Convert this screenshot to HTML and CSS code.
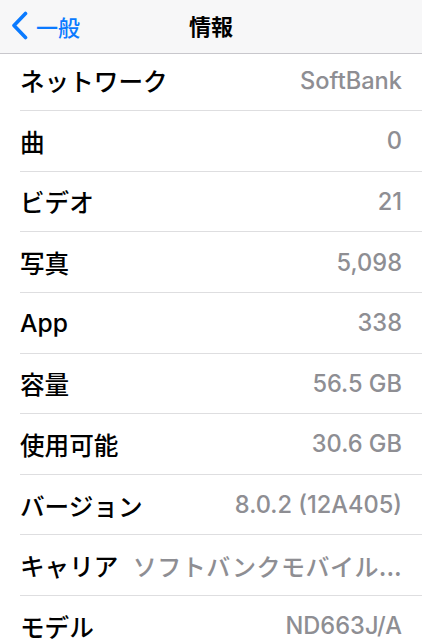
FILE: index.html
```html
<!DOCTYPE html>
<html lang="ja">
<head>
<meta charset="utf-8">
<link rel="stylesheet" href="styles.css">
</head>
<body>
<div class="screen">
  <header class="navbar">
    <div class="back">
      <svg class="chevron" width="18" height="30" viewBox="0 0 18 30">
        <polyline points="14.5,2.5 3,14.5 14.5,26.5" fill="none" stroke="#0a7aff" stroke-width="3.6" stroke-linecap="round" stroke-linejoin="round"/>
      </svg>
      <span class="back-label">一般</span>
    </div>
    <div class="title">情報</div>
  </header>
  <ul class="list">
    <li class="row first"><span class="label">ネットワーク</span><span class="value">SoftBank</span></li>
    <li class="row"><span class="label">曲</span><span class="value">0</span></li>
    <li class="row"><span class="label">ビデオ</span><span class="value">21</span></li>
    <li class="row"><span class="label">写真</span><span class="value">5,098</span></li>
    <li class="row"><span class="label">App</span><span class="value">338</span></li>
    <li class="row"><span class="label">容量</span><span class="value">56.5 GB</span></li>
    <li class="row"><span class="label">使用可能</span><span class="value">30.6 GB</span></li>
    <li class="row"><span class="label">バージョン</span><span class="value">8.0.2 (12A405)</span></li>
    <li class="row"><span class="label">キャリア</span><span class="value kana">ソフトバンクモバイル...</span></li>
    <li class="row"><span class="label">モデル</span><span class="value">ND663J/A</span></li>
  </ul>
</div>
</body>
</html>
```
FILE: styles.css
```css
* { box-sizing: border-box; }
html, body {
  margin: 0;
  padding: 0;
  background: #ffffff;
}
.screen {
  width: 422px;
  height: 640px;
  overflow: hidden;
  font-family: "Noto Sans CJK JP", sans-serif;
}
.navbar {
  position: relative;
  height: 54px;
  background: #f7f7f8;
  border-bottom: 1px solid #c8c7cc;
  display: flex;
  align-items: center;
  justify-content: center;
}
.back {
  position: absolute;
  left: 11px;
  top: 0;
  height: 53px;
  display: flex;
  align-items: center;
  gap: 7px;
  color: #0a7aff;
}
.chevron {
  display: block;
  margin-top: -1px;
}
.back-label {
  font-size: 22px;
  font-weight: 500;
  line-height: 1;
  margin-top: -2px;
}
.title {
  font-size: 22px;
  font-weight: 700;
  color: #000;
  line-height: 1;
  margin-top: -3px;
}
.list {
  list-style: none;
  margin: 0;
  padding: 0 0 0 20px;
}
.row {
  height: 60.625px;
  border-bottom: 1px solid #dedee0;
  display: flex;
  align-items: center;
  justify-content: space-between;
  padding-right: 20px;
  gap: 12px;
}
.row.first {
  height: 57px;
  padding-bottom: 4px;
}
.label {
  font-family: "Inter", "Noto Sans CJK JP", sans-serif;
  font-size: 24.6px;
  font-weight: 500;
  color: #000;
  white-space: nowrap;
  flex: none;
}
.value {
  font-family: "Inter", "Noto Sans CJK JP", sans-serif;
  font-size: 23.6px;
  font-weight: 500;
  color: #8e8e93;
  white-space: nowrap;
  overflow: hidden;
}
.value.kana {
  font-family: "Noto Sans CJK JP", sans-serif;
  font-size: 24px;
  font-weight: 500;
  letter-spacing: 0.5px;
}
```
